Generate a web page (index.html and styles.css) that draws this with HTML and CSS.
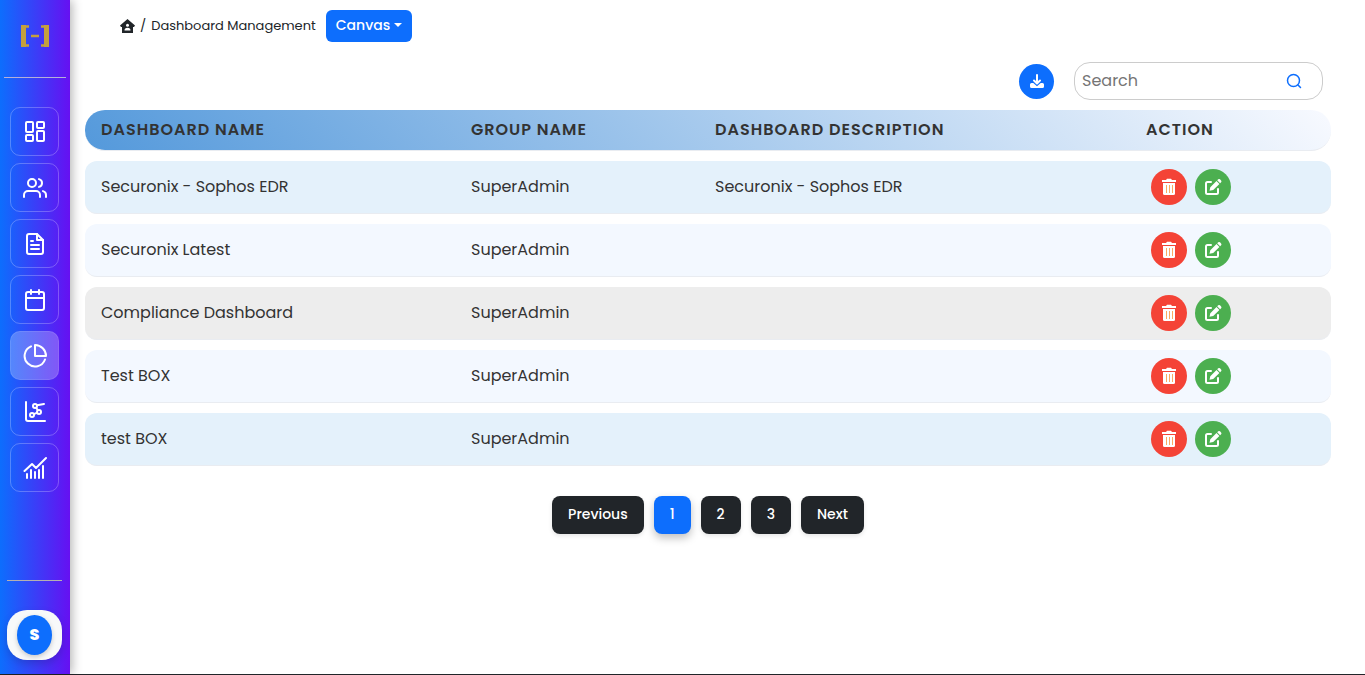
FILE: index.html
```html
<!DOCTYPE html>
<html lang="en">
<head>
<meta charset="utf-8">
<meta name="viewport" content="width=device-width, initial-scale=1">
<title>Dashboard Management</title>
<link rel="stylesheet" href="styles.css">
</head>
<body>
<svg class="sprite" aria-hidden="true">
  <symbol id="trash" viewBox="0 0 18 18"><path fill="#fff" d="M2 2h4l1-1.200h4L12 2h4v2H2z"/><path fill="#fff" d="M3 5h12v10.500q0 1.500-1.500 1.500h-9Q3 17 3 15.500z"/><path stroke="#fbab63" stroke-width="1" d="M6.500 7v8M9.500 7v8M12.500 7v8"/></symbol>
  <symbol id="edit" viewBox="0 0 18 18"><path fill="none" stroke="#fff" stroke-width="2" stroke-linecap="round" stroke-linejoin="round" d="M7 4H3.500Q2 4 2 5.500v9Q2 16 3.500 16h9q1.500 0 1.500-1.500V11"/><path fill="#fff" d="M5.500 12.800l.8-3.600 6.200-6.200 2.900 2.900-6.200 6.200zM13.200 2.300l1-1q.9-.8 1.800 0l1.100 1.100q.8.900 0 1.800l-1 1z"/></symbol>
</svg>
<div class="app">
  <aside class="sidebar">
    <div class="brand">
      <svg width="30" height="22" viewBox="0 0 30 22" fill="none" stroke="#c4a03e" role="img" aria-label="Logo"><path stroke-width="5" d="M3.500 0v22M26.500 0v22"/><path stroke-width="2.500" d="M1 1.500h8M1 20.500h8M21 1.500h8M21 20.500h8M11 11h8"/></svg>
    </div>
    <nav class="menu">
      <a class="menu-item" href="#" aria-label="Dashboard"><svg viewBox="0 0 24 24"><rect x="3" y="2" width="7" height="10" rx="1"/><rect x="14" y="2" width="7" height="6" rx="1"/><rect x="14" y="11" width="7" height="10" rx="1"/><rect x="3" y="15" width="7" height="6" rx="1"/></svg></a>
      <a class="menu-item" href="#" aria-label="Users"><svg viewBox="0 0 24 24"><path d="M17 21v-2a4 4 0 0 0-4-4H5a4 4 0 0 0-4 4v2"/><circle cx="9" cy="7" r="4"/><path d="M23 21v-2a4 4 0 0 0-3-3.870M16 3.130a4 4 0 0 1 0 7.750"/></svg></a>
      <a class="menu-item" href="#" aria-label="Documents"><svg viewBox="0 0 24 24"><path d="M14 2H6a2 2 0 0 0-2 2v16a2 2 0 0 0 2 2h12a2 2 0 0 0 2-2V8z"/><path d="M14 2v6h6M16 13H8M16 17H8M10 9H8"/></svg></a>
      <a class="menu-item" href="#" aria-label="Calendar"><svg viewBox="0 0 24 24"><rect x="3" y="4" width="18" height="18" rx="2"/><path d="M16 2v4M8 2v4M3 10h18"/></svg></a>
      <a class="menu-item active" href="#" aria-label="Charts" aria-current="page"><svg viewBox="0 0 24 24"><path d="M22 15.500A10.500 10.500 0 1 1 8 2.300M23 12A11 11 0 0 0 12 1v11z"/></svg></a>
      <a class="menu-item" href="#" aria-label="Scatter"><svg viewBox="0 0 24 24"><path d="M3 2v17a2 2 0 0 0 2 2h17"/><circle cx="12" cy="6" r="2"/><circle cx="16" cy="12" r="2"/><circle cx="9" cy="15" r="2"/><path d="M14 5.200 21 4M13.200 7.800 14.800 10.200M10.900 14.200 14.200 12.700"/></svg></a>
      <a class="menu-item" href="#" aria-label="Trends"><svg viewBox="0 0 24 24"><path d="M1.500 15 9 8l4 4L23 2M4 22v-4M8 22v-8M12 22v-6M16 22v-8M20 22V10"/></svg></a>
    </nav>
    <div class="account"><button class="account-button" type="button"><span class="avatar">S</span></button></div>
  </aside>
  <main class="main">
    <header class="crumbs">
      <a class="home" href="#" aria-label="Home"><svg width="15" height="14" viewBox="0 0 15 14"><path fill="#212529" d="M7.500 0 15 6.500 14 8h-1v6H2V8H1L0 6.500z"/><circle cx="7.500" cy="6.200" r="1.500" fill="#fff"/><path fill="#fff" d="M4.500 11.500Q4.500 8.700 7.500 8.700t3 2.800z"/></svg></a>
      <span class="slash">/</span>
      <span class="crumb">Dashboard Management</span>
      <button class="canvas" type="button">Canvas<span class="caret"></span></button>
    </header>
    <div class="tools">
      <button class="download" type="button" aria-label="Download"><svg width="16" height="16" viewBox="0 0 16 16"><path fill="none" stroke="#fff" stroke-width="2" stroke-linecap="round" stroke-linejoin="round" d="M8 2v8M5 7.500l3 3 3-3"/><path fill="#fff" d="M2.500 10h1.800L8 13.200 11.700 10h1.800q1.500 0 1.500 1.500v2q0 1.500-1.500 1.500h-11Q1 15 1 13.500v-2Q1 10 2.500 10z"/></svg></button>
      <div class="search">
        <input type="text" placeholder="Search" aria-label="Search">
        <svg width="16" height="16" viewBox="0 0 16 16" fill="none" stroke="#0d6efd" stroke-width="1.500" stroke-linecap="round"><circle cx="7.500" cy="7.500" r="6"/><path d="M12 12l2.500 2.500"/></svg>
      </div>
    </div>
    <table class="table">
      <thead><tr><th>Dashboard Name</th><th>Group Name</th><th>Dashboard Description</th><th>Action</th></tr></thead>
      <tbody>
        <tr class="blue"><td>Securonix - Sophos EDR</td><td>SuperAdmin</td><td>Securonix - Sophos EDR</td><td class="actions"><button class="round delete" type="button" aria-label="Delete"><svg><use href="#trash"/></svg></button><button class="round edit" type="button" aria-label="Edit"><svg><use href="#edit"/></svg></button></td></tr>
        <tr><td>Securonix Latest</td><td>SuperAdmin</td><td></td><td class="actions"><button class="round delete" type="button" aria-label="Delete"><svg><use href="#trash"/></svg></button><button class="round edit" type="button" aria-label="Edit"><svg><use href="#edit"/></svg></button></td></tr>
        <tr class="gray"><td>Compliance Dashboard</td><td>SuperAdmin</td><td></td><td class="actions"><button class="round delete" type="button" aria-label="Delete"><svg><use href="#trash"/></svg></button><button class="round edit" type="button" aria-label="Edit"><svg><use href="#edit"/></svg></button></td></tr>
        <tr><td>Test BOX</td><td>SuperAdmin</td><td></td><td class="actions"><button class="round delete" type="button" aria-label="Delete"><svg><use href="#trash"/></svg></button><button class="round edit" type="button" aria-label="Edit"><svg><use href="#edit"/></svg></button></td></tr>
        <tr class="blue"><td>test BOX</td><td>SuperAdmin</td><td></td><td class="actions"><button class="round delete" type="button" aria-label="Delete"><svg><use href="#trash"/></svg></button><button class="round edit" type="button" aria-label="Edit"><svg><use href="#edit"/></svg></button></td></tr>
      </tbody>
    </table>
    <nav class="pages" aria-label="Pagination">
      <button type="button">Previous</button>
      <button type="button" class="current" aria-current="page">1</button>
      <button type="button">2</button>
      <button type="button">3</button>
      <button type="button">Next</button>
    </nav>
  </main>
</div>
</body>
</html>
```
FILE: styles.css
```css
* { box-sizing: border-box; }
body {
  margin: 0;
  background: #fff;
  color: #212529;
  font-family: Poppins, Inter, "Open Sans", sans-serif;
  font-size: 16px;
  line-height: 24px;
}
button, input { font: inherit; }
button { border: 0; cursor: pointer; }
.sprite { position: absolute; width: 0; height: 0; }
.app { display: flex; min-height: 100vh; border-bottom: 1px solid #212529; }

.sidebar {
  flex: none;
  display: flex;
  flex-direction: column;
  width: 70px;
  background: linear-gradient(to right, #0d6efd, #6610f2);
  box-shadow: 2px 0 10px rgba(0, 0, 0, 0.3);
}
.brand {
  display: flex;
  justify-content: center;
  margin: 0 4px;
  padding: 25px 1px 30px 0;
  border-bottom: 1px solid #b4b0d8;
}
.brand svg { display: block; }
.menu {
  display: flex;
  flex-direction: column;
  align-items: center;
  gap: 7px;
  padding: 29px 1px 0 0;
}
.menu-item {
  display: flex;
  align-items: center;
  justify-content: center;
  width: 49px;
  height: 49px;
  border: 1px solid rgba(255, 255, 255, 0.25);
  border-radius: 10px;
}
.menu-item.active { border-color: rgba(255, 255, 255, 0.1); background: rgba(255, 255, 255, 0.25); }
.menu-item svg {
  width: 24px;
  height: 24px;
  fill: none;
  stroke: #fff;
  stroke-width: 2;
  stroke-linecap: round;
  stroke-linejoin: round;
}
.account {
  margin: auto 8px 14px 7px;
  padding-top: 29px;
  border-top: 1px solid #b5b0b0;
}
.account-button {
  display: flex;
  align-items: center;
  justify-content: center;
  width: 55px;
  height: 50px;
  padding: 0;
  border-radius: 20px;
  background: #f8f9fa;
  box-shadow: 0 4px 8px rgba(0, 0, 0, 0.15);
}
.avatar {
  width: 35px;
  height: 40px;
  border-radius: 50%;
  background: #0d6efd;
  color: #fff;
  font-size: 16px;
  font-weight: 800;
  line-height: 40px;
  box-shadow: 0 2px 5px rgba(0, 0, 0, 0.2);
}

.main { flex: 1; min-width: 0; padding: 10px 34px 20px 15px; }
.crumbs { display: flex; align-items: center; height: 32px; padding-left: 35px; font-size: 13px; }
.home svg { display: block; }
.slash { margin: 0 5px; }
.crumb { margin-right: 10px; }
.canvas {
  display: flex;
  align-items: center;
  gap: 4px;
  height: 32px;
  padding: 0 10px 2px;
  border-radius: 6px;
  background: #0d6efd;
  color: #fff;
  font-size: 14px;
  font-weight: 500;
}
.caret { border: 4px solid transparent; border-top-color: #fff; border-bottom: 0; }
.tools {
  display: flex;
  align-items: center;
  justify-content: flex-end;
  gap: 20px;
  margin: 20px 8px 10px 0;
}
.download {
  display: flex;
  align-items: center;
  justify-content: center;
  width: 35px;
  height: 35px;
  padding: 0;
  border-radius: 50%;
  background: #0d6efd;
}
.search {
  display: flex;
  align-items: center;
  width: 249px;
  height: 38px;
  padding: 0 20px 0 7px;
  border: 1px solid #ccc;
  border-radius: 16px;
}
.search input { flex: 1; min-width: 0; padding: 0; border: 0; outline: 0; background: none; }
.search input::placeholder { color: #757575; opacity: 1; }

.table, .table thead { display: block; }
.table tbody { display: grid; gap: 10px; margin-top: 10px; }
.table tr {
  display: grid;
  grid-template-columns: 370fr 244fr 431fr 201fr;
  align-items: center;
  height: 53px;
  border-bottom: 1px solid #e9ecf1;
  border-radius: 12px;
  background: #f3f8ff;
}
.table th, .table td { padding: 0 16px; color: #333; text-align: left; }
.table thead tr {
  height: 41px;
  border-radius: 20px;
  background: linear-gradient(45deg, #5499db, #f8faff);
}
.table th { font-weight: 600; letter-spacing: 1px; text-transform: uppercase; }
.table .blue { background: #e4f1fb; }
.table .gray { background: #ededed; }
.table .actions { display: flex; gap: 8px; padding-left: 21px; }
.round {
  display: flex;
  align-items: center;
  justify-content: center;
  width: 36px;
  height: 36px;
  padding: 0;
  border-radius: 50%;
}
.round svg { width: 18px; height: 18px; }
.delete { background: #f44336; }
.edit { background: #4caf50; }

.pages { display: flex; justify-content: center; gap: 10px; margin-top: 30px; }
.pages button {
  height: 38px;
  padding: 0 16px 2px;
  border-radius: 8px;
  background: #212529;
  color: #fff;
  font-size: 14px;
  font-weight: 500;
  box-shadow: 0 2px 4px rgba(0, 0, 0, 0.1);
}
.pages .current { background: #0d6efd; box-shadow: 0 4px 8px rgba(0, 0, 0, 0.25); }
```
